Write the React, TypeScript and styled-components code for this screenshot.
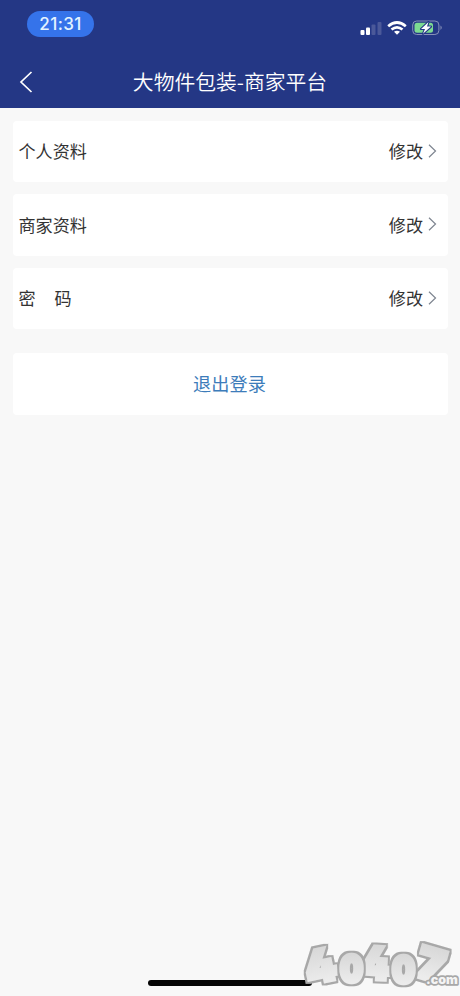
import React from "react";
import styled, { createGlobalStyle } from "styled-components";

const Global = createGlobalStyle`
  * { box-sizing: border-box; }
  body { margin: 0; background: #f8f8f8; }
  svg { display: block; }
`;
const Screen = styled.div`
  position: relative;
  display: flex;
  flex-direction: column;
  width: 460px;
  height: 996px;
  overflow: hidden;
  background: #f8f8f8;
  color: #333;
  font-family: "Noto Sans CJK SC", sans-serif;
`;
const Header = styled.header`
  height: 108px;
  background: #243785;
  color: #fff;
`;
const StatusBar = styled.div`
  display: flex;
  justify-content: space-between;
  height: 54px;
  padding: 11px 17px 0 27px;
`;
const Clock = styled.div`
  width: 67px;
  height: 26px;
  border-radius: 13px;
  background: #3573ea;
  color: #e4f3ff;
  font: 500 17px/26px Inter, sans-serif;
  letter-spacing: 0.4px;
  text-align: center;
`;
const StatusIcons = styled.div`
  display: flex;
  align-items: center;
  gap: 5px;
  height: 34px;
`;
const NavBar = styled.div`
  display: grid;
  grid-template-columns: 52px 1fr 52px;
  align-items: center;
  height: 54px;
`;
const BackButton = styled.button`
  padding: 1px 0 0 19px;
  border: 0;
  background: none;
  color: #fff;
`;
const Title = styled.h1`
  margin: 0;
  font-size: 20.8px;
  line-height: 53px;
  font-weight: 350;
  text-align: center;
  white-space: nowrap;
`;
const Content = styled.main`
  display: flex;
  flex-direction: column;
  gap: 12px;
  padding: 12.5px 12.5px 0;
`;
const Row = styled.div`
  display: flex;
  align-items: center;
  height: 61.5px;
  padding: 0 10.5px 1.5px 6px;
  border-radius: 4px;
  background: #fff;
  font-size: 17.1px;
`;
const Label = styled.span<{ $spread?: boolean }>`
  flex: 1;
  letter-spacing: ${(p) => (p.$spread ? "19px" : "0")};
`;
const Action = styled.span`
  display: flex;
  align-items: center;
  gap: 5px;
`;
const Logout = styled.button`
  height: 61.5px;
  margin-top: 12px;
  padding: 0 1px 2px 0;
  border: 0;
  border-radius: 4px;
  background: #fff;
  color: #3d7cba;
  font: 400 18.2px/26px "Noto Sans CJK SC", sans-serif;
`;
const HomeIndicator = styled.div`
  position: absolute;
  left: 148px;
  bottom: 10px;
  width: 164px;
  height: 6px;
  border-radius: 3px;
  background: #050505;
`;
const Watermark = styled.svg`
  position: absolute;
  right: 0;
  bottom: 0;
  overflow: visible;
  font-family: Inter, sans-serif;
  font-weight: 900;
  font-feature-settings: "cv02";
`;

const rows = [
  { label: "个人资料" },
  { label: "商家资料" },
  { label: "密码", spread: true },
];

const digits = [
  { char: "4", place: "translate(20.5 29.5) rotate(-12)", size: 44, weight: 4.5 },
  { char: "4", place: "translate(76 27) rotate(3) scale(.94 1)", size: 44, weight: 4.5 },
  { char: "7", place: "translate(131 28) rotate(16) scale(1.04 1)", size: 42, weight: 5 },
  { char: "0", place: "translate(51.5 33) scale(.86 1)", size: 37, weight: 4.6 },
  { char: "0", place: "translate(103.5 34) scale(.86 1)", size: 37, weight: 4.6 },
];

const Signal = () => (
  <svg width="22" height="14" viewBox="0 0 22 14">
    <rect x="0.5" y="9" width="4" height="5" rx="1" fill="#fff" />
    <rect x="6" y="6.5" width="4" height="7.5" rx="1" fill="#fff" />
    <rect x="11.5" y="3.5" width="4" height="10.5" rx="1" fill="#4b5999" />
    <rect x="17.5" y="1" width="4" height="13" rx="1" fill="#4b5999" />
  </svg>
);
const Wifi = () => (
  <svg width="20" height="14" viewBox="0 0 20 14" fill="none" stroke="#fff" strokeWidth="2.7">
    <path d="M1.2 5.2Q10 -2.2 18.8 5.2" />
    <path d="M4.5 8.5Q10 4.1 15.5 8.5" />
    <path d="M7 10.8Q10 8.5 13 10.8L10 13.8Z" fill="#fff" stroke="none" />
  </svg>
);
const Battery = () => (
  <svg width="31" height="16" viewBox="0 0 31 16">
    <rect x="0.7" y="1" width="26.2" height="13.5" rx="4" fill="none" stroke="#8791b9" />
    <rect x="2.5" y="2.8" width="18.5" height="10" rx="2.5" fill="#7cda91" />
    <path d="M28.5 5.5Q31 7.7 28.5 10Z" fill="#8791b9" />
    <path
      d="M16.5 2L9 9H13L11 13.8L19 6.6H15Z"
      fill="#fff"
      stroke="#243785"
      strokeWidth="2.2"
      strokeLinejoin="round"
      paintOrder="stroke"
    />
  </svg>
);

export default function App() {
  return (
    <Screen>
      <Global />
      <Header>
        <StatusBar>
          <Clock>21:31</Clock>
          <StatusIcons>
            <Signal />
            <Wifi />
            <Battery />
          </StatusIcons>
        </StatusBar>
        <NavBar>
          <BackButton aria-label="返回">
            <svg width="14" height="22" viewBox="0 0 14 22" fill="none" stroke="currentColor" strokeWidth="1.7">
              <path d="M12.5 1L2 11L12.5 21" />
            </svg>
          </BackButton>
          <Title>大物件包装-商家平台</Title>
        </NavBar>
      </Header>
      <Content>
        {rows.map((r) => (
          <Row key={r.label}>
            <Label $spread={r.spread}>{r.label}</Label>
            <Action>
              修改
              <svg width="9" height="14" viewBox="0 0 9 14" fill="none" stroke="#7e8590" strokeWidth="1.2">
                <path d="M1 0.8L7.5 7L1 13.2" />
              </svg>
            </Action>
          </Row>
        ))}
        <Logout>退出登录</Logout>
      </Content>
      <HomeIndicator />
      <Watermark width="160" height="60" viewBox="0 0 160 60">
        <defs>
          <linearGradient id="silver" x1="0" y1="0" x2="0" y2="1">
            <stop offset="0.1" stopColor="#d6d6d6" />
            <stop offset="0.8" stopColor="#ececec" />
          </linearGradient>
          <filter id="rim" x="-20%" y="-20%" width="140%" height="140%">
            <feMorphology in="SourceAlpha" operator="dilate" radius="1.6" result="grown" />
            <feFlood floodColor="#a8a8a8" />
            <feComposite in2="grown" operator="in" />
            <feMerge>
              <feMergeNode />
              <feMergeNode in="SourceGraphic" />
            </feMerge>
          </filter>
        </defs>
        <g textAnchor="middle" fill="url(#silver)" stroke="url(#silver)">
          {digits.map((d, i) => (
            <g key={i} filter="url(#rim)">
              <text transform={d.place} y={d.size * 0.364} fontSize={d.size} strokeWidth={d.weight}>
                {d.char}
              </text>
            </g>
          ))}
        </g>
        <text
          x="126"
          y="47.5"
          fontSize="12.5"
          fill="#f4f4f4"
          stroke="#a8a8a8"
          strokeWidth="3.4"
          paintOrder="stroke"
          strokeLinejoin="round"
        >
          .com
        </text>
      </Watermark>
    </Screen>
  );
}
